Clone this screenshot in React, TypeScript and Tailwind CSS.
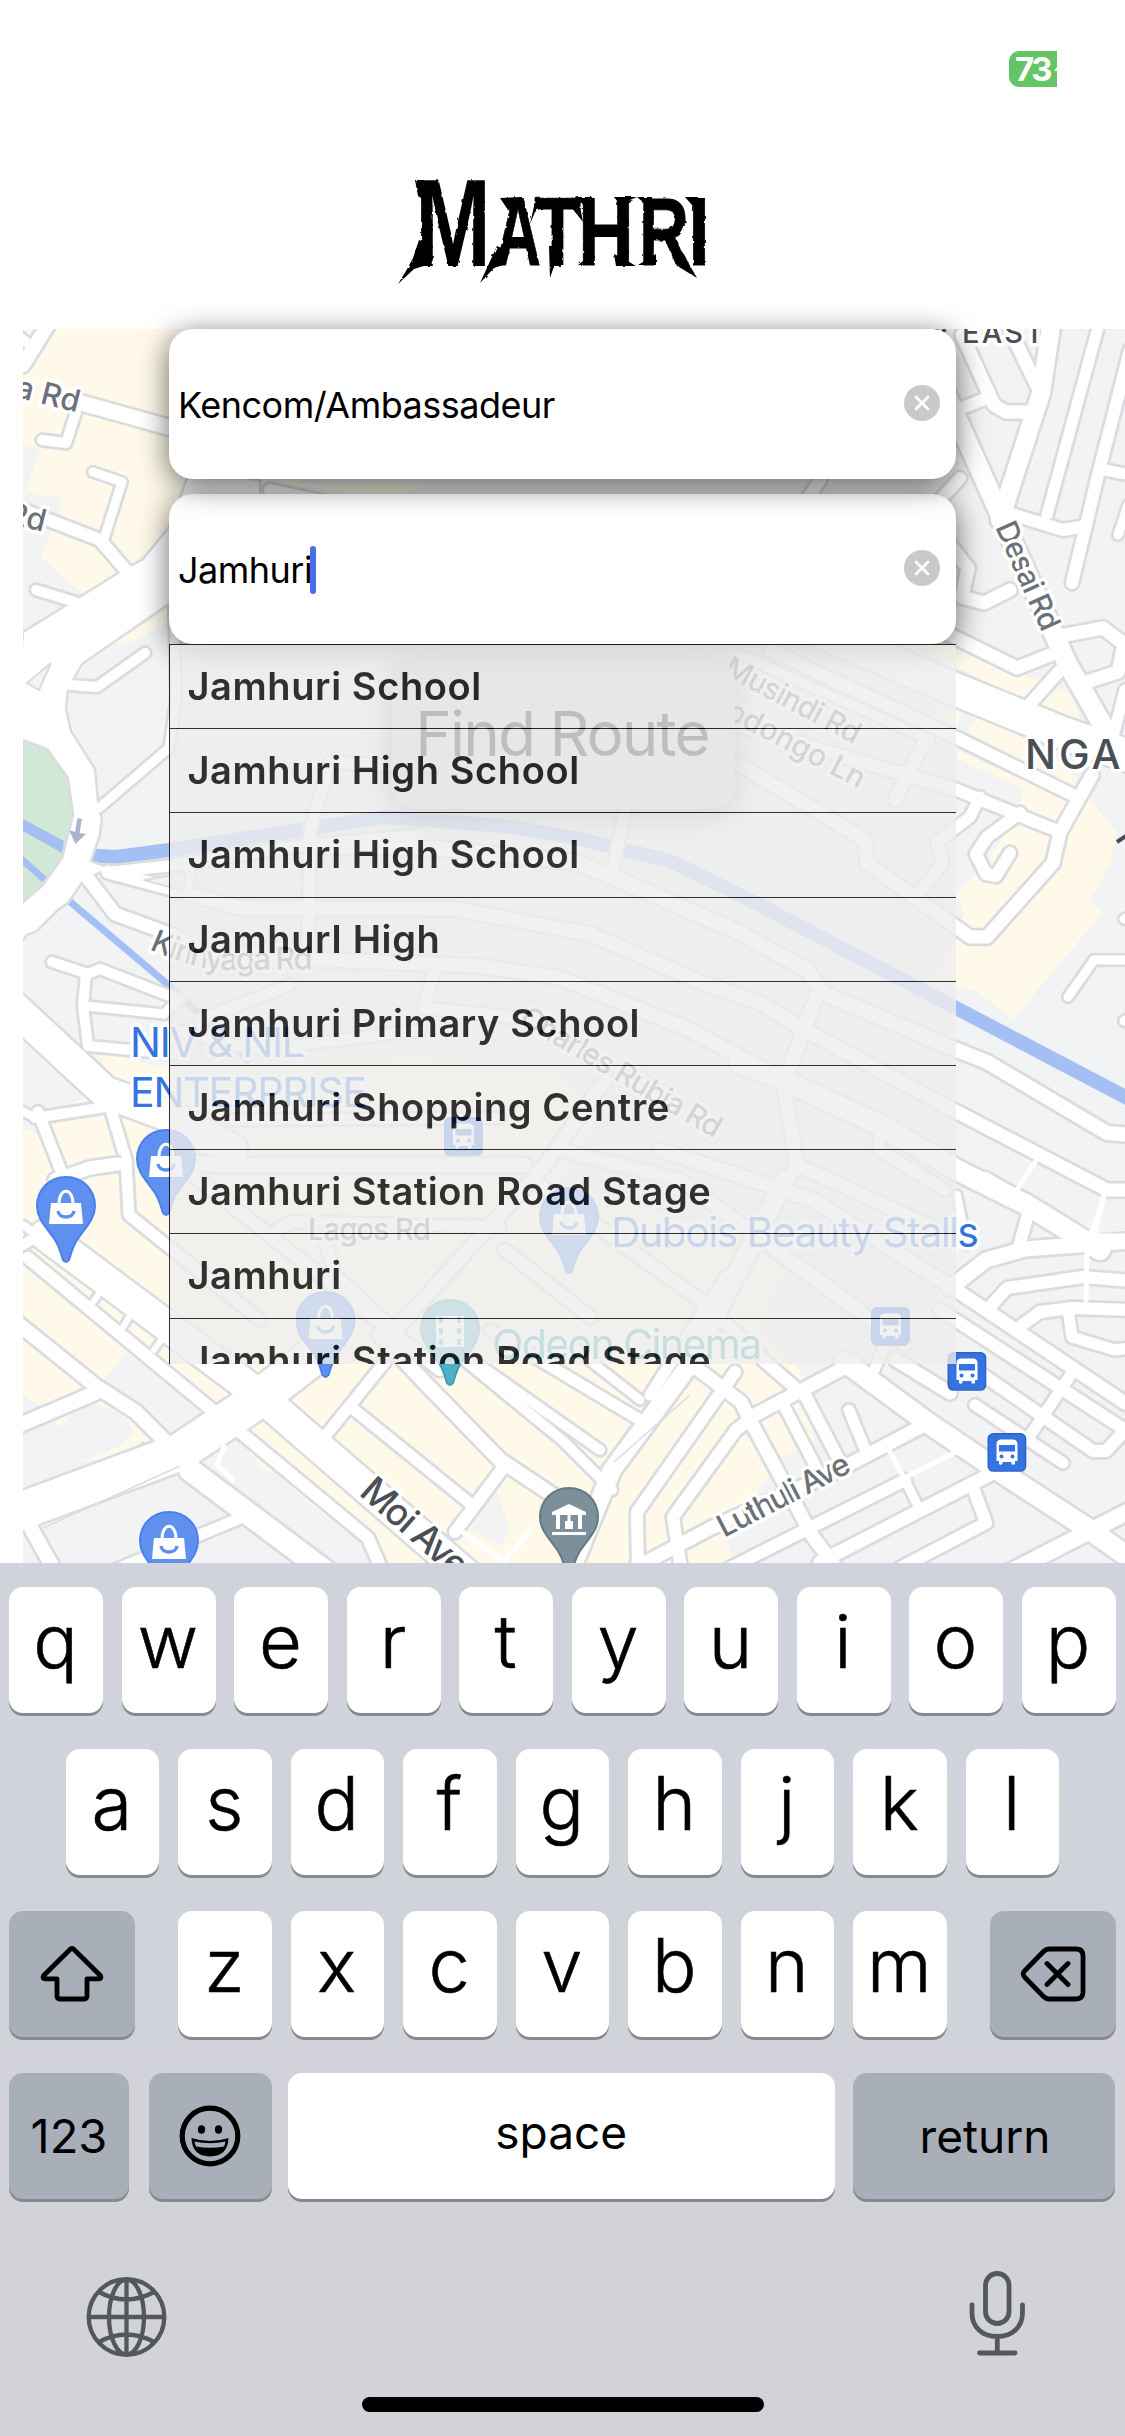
import React from "react";

type Road = [string, number];

/* Street centre lines with the width of the white carriageway. */
const roads: Road[] = [
  // north-west corner
  ["M23 365 L52 318", 14],
  ["M10 330 L30 345", 10],
  ["M78 402 L200 436", 15],
  ["M76 412 L66 443 L42 440", 10],
  ["M93 472 L122 482 L102 545", 9],
  ["M23 510 L100 540 L130 575", 12],
  ["M36 590 L75 602", 10],
  ["M70 685 L97 687 L145 653", 10],
  ["M174 600 L176 700 L169 748 L99 808", 9],
  ["M112 872 L169 866 L300 846 L420 835", 11],
  ["M108 872 L172 889 L240 908 L455 909 L590 934 L700 982 L760 1003 L805 1030 L957 1112 L1107 1190 L1125 1190", 13],
  ["M320 846 L430 848 L575 862 L620 880 L740 933 L807 970 L823 993 L957 1050 L987 1062 L1107 1133 L1130 1135", 14],
  ["M86 876 L115 914 L175 936 L220 962 L330 960 L480 966 L560 978 L690 1030 L783 1080", 13],
  ["M52 962 L88 974 L100 969 L180 1000", 10],
  ["M86 974 L83 1005 L88 1046 L175 1054", 10],
  ["M86 1006 L164 1014 L178 1000", 9],
  ["M330 762 L310 830 L308 945", 11],
  ["M330 762 L392 766", 11],
  ["M190 868 L186 895", 10],
  ["M625 810 L612 872", 11],
  ["M435 967 L424 1008 L540 1020", 11],
  ["M172 1030 L260 1050 L420 1030", 10],
  ["M200 1020 L290 985", 10],
  // avenues on the west side
  ["M35 1118 L112 1106", 10],
  ["M38 1112 L66 1184", 11],
  ["M55 1180 L90 1168 L125 1163", 13],
  ["M20 1110 L40 1120", 8],
  ["M108 1100 L126 1160 L129 1215 L180 1256 L260 1320", 11],
  ["M15 1250 L55 1225", 10],
  ["M23 1225 L50 1245", 8],
  ["M28 1258 L212 1410", 12],
  ["M16 1322 L97 1387 L136 1412 L168 1444", 14],
  ["M15 1427 L95 1393", 14],
  ["M106 1283 L92 1304", 6],
  ["M136 1307 L121 1330", 6],
  ["M167 1332 L154 1350", 6],
  ["M190 1470 L330 1575", 22],
  ["M115 1570 L243 1517", 11],
  ["M22 1512 L60 1580", 14],
  ["M240 1432 L368 1538 L384 1575", 12],
  ["M352 1408 L472 1505", 11],
  ["M318 1445 L385 1362", 11],
  ["M503 1468 L455 1532", 12],
  ["M380 1335 L430 1388 L500 1460 L575 1510", 14],
  ["M170 1160 L215 1165 L525 1165", 14],
  ["M232 1120 L500 1118", 10],
  ["M183 1167 L440 1370", 12],
  ["M270 1235 L290 1222 L500 1227", 11],
  ["M325 1240 L335 1275 L400 1335", 11],
  ["M605 1080 L545 1165 L400 1325", 13],
  ["M505 1250 L590 1317", 12],
  ["M540 1185 L700 1300 L760 1355", 12],
  ["M560 1150 L680 1180 L860 1310", 12],
  ["M440 1340 L562 1440 L612 1490", 10],
  ["M465 1355 L600 1450", 10],
  ["M490 1330 L640 1420", 11],
  ["M570 1345 L640 1400", 9],
  ["M660 1150 L813 1200 L956 1290 L1125 1403", 13],
  ["M785 1180 L690 1364 L612 1470 L575 1560", 18],
  ["M774 1250 L905 1345", 12],
  ["M726 1277 L650 1395", 11],
  ["M783 1080 L797 1165 L775 1200", 13],
  ["M797 1165 L960 1240", 12],
  ["M880 1125 L879 1150 L945 1190", 11],
  ["M817 995 L785 1080", 13],
  ["M740 1063 L783 1080 L880 1125 L957 1170 L1027 1205 L1100 1250", 20],
  // downtown grid
  ["M735 1372 L637 1512 L638 1575", 12],
  ["M749 1420 L736 1430 L673 1517 L682 1575", 12],
  ["M695 1367 L741 1402 L751 1422 L813 1537 L838 1570", 13],
  ["M749 1418 L806 1388 L855 1362", 13],
  ["M763 1360 L806 1397 L840 1462", 12],
  ["M783 1404 L820 1475", 11],
  ["M845 1362 L928 1423 L993 1467 L1093 1532 L1135 1562", 20],
  ["M928 1423 L835 1472 L713 1527 L635 1568", 13],
  ["M849 1410 L867 1454", 11],
  ["M905 1480 L730 1568", 12],
  ["M993 1473 L917 1512 L820 1562", 13],
  ["M905 1480 L920 1510", 9],
  ["M973 1487 L986 1523 L900 1568", 12],
  ["M1135 1508 L1010 1572", 16],
  ["M885 1345 L870 1380", 10],
  ["M896 1360 L950 1393", 13],
  ["M975 1405 L1063 1463", 11],
  ["M980 1373 L1093 1451 L1106 1451 L1130 1425", 12],
  ["M1072 1373 L1029 1437", 11],
  ["M940 1310 L1125 1430", 12],
  ["M950 1288 L986 1260 L1025 1249 L1130 1241", 15],
  ["M989 1308 L1007 1288 L1083 1277 L1130 1281", 12],
  ["M1022 1325 L1040 1312 L1072 1308 L1130 1310", 12],
  ["M1068 1310 L1072 1337 L1115 1350 L1130 1348", 11],
  ["M1028 1214 L1018 1250", 12],
  ["M957 1195 L967 1245", 8],
  // north-east
  ["M944 390 L1067 663 L1117 750", 19],
  ["M962 335 L994 405 L1006 412 L1035 412", 13],
  ["M945 415 L987 398", 12],
  ["M1005 320 L1040 392", 13],
  ["M1052 320 L1041 393 L1000 520", 18],
  ["M1100 320 L1047 515", 11],
  ["M1130 350 L1098 475 L1072 583", 12],
  ["M1105 470 L1135 476", 11],
  ["M1005 512 L1063 530 L1086 526", 12],
  ["M1118 535 L1128 505", 9],
  ["M950 545 L968 568 L962 597 L984 603 L1010 590", 13],
  ["M940 500 L960 478", 12],
  ["M940 630 L1017 668 L1050 655", 13],
  ["M1030 704 L1062 668", 12],
  ["M1055 637 L1103 628 L1124 644 L1118 672 L1080 684", 13],
  ["M1125 690 L1112 740", 11],
  ["M770 650 L957 738 L1077 797", 12],
  ["M740 655 L930 740", 9],
  ["M720 720 L957 790 L1060 832", 12],
  ["M1092 775 L1060 832 L1053 863 L987 937 L970 937 L867 863 L865 840 L740 765", 13],
  ["M980 797 L970 817 L937 842 L943 862 L920 893", 11],
  ["M1020 813 L987 837 L976 854 L986 874 L996 876 L1010 853", 12],
  ["M1068 997 L1094 960 L1130 960", 9],
  ["M1124 919 L1135 915", 9],
  ["M1124 1021 L1135 1015", 9],
  ["M925 740 L895 800", 12],
  ["M270 490 L340 505 L420 520", 12],
  ["M820 480 L800 510", 12],
];

/* Blocks shaded as commercial areas. */
const sand = [
  "M23 329 H300 V500 H188 L169 527 L132 566 L82 594 L41 557 L63 498 L40 495 L26 489 L40 449 L23 444Z",
  "M118 640 L166 610 V624 L118 648Z",
  "M290 484 L420 484 L400 500Z",
  "M98 1052 L169 1068 L420 1058 L560 1070 L600 1120 L560 1180 L790 1255 L760 1330 L800 1370 L815 1440 L781 1457 L757 1493 L727 1540 L734 1563 L390 1563 L263 1471 L240 1440 L23 1470 V1122 L60 1110 L112 1085Z",
  "M820 600 L957 645 L1025 675 L1040 680 L1025 702 L957 667 L800 650Z",
  "M1037 707 L1060 687 L1073 697 L1084 729Z",
  "M1098 707 L1125 712 L1118 725Z",
  "M940 700 L962 715 L950 740 L930 725Z",
  "M967 733 L977 718 L1030 738 L1077 777 L1073 790Z",
  "M957 750 L1073 803 L1058 833 L1018 813 L1023 790 L957 758Z",
  "M1007 830 L1020 817 L1087 795 L1117 833 L1110 865 L1090 900 L1103 913 L1040 987 L1013 1020 L978 992 L930 980 L957 937 L963 913 L957 893 L987 860Z",
];

/* Plain blocks that lie inside the commercial areas. */
const plain = [
  "M23 1395 L38 1405 L60 1427 L85 1400 L122 1414 L134 1433 L118 1447 L23 1484Z",
  "M127 1353 L208 1415 L170 1433 L102 1382Z",
  "M23 1490 L185 1440 L238 1440 L252 1455 L262 1471 L273 1471 L375 1563 H23Z",
  "M485 1500 L495 1485 L510 1530 L500 1545 L470 1530Z",
  "M23 1110 L40 1122 L38 1134 L23 1128Z",
];

const Pin = ({ x, top, fill, edge, children }: { x: number; top: number; fill: string; edge: string; children: React.ReactNode }) => (
  <g transform={`translate(${x} ${top})`}>
    <path
      d="M0 1 C-17 1 -29 14 -29 30 C-29 43 -20 51 -11 64 C-6 72 -5 78 -3 84 Q0 88 3 84 C5 78 6 72 11 64 C20 51 29 43 29 30 C29 14 17 1 0 1Z"
      fill={fill}
      stroke={edge}
      strokeWidth="2"
    />
    {children}
  </g>
);

const BagPin = ({ x, top }: { x: number; top: number }) => (
  <Pin x={x} top={top} fill="#5f8fef" edge="#4a80ee">
    <path d="M-15 27 H15 L17 48 H-17Z" fill="#fff" />
    <path d="M-7 28 C-7 11 7 11 7 28" fill="none" stroke="#fff" strokeWidth="3" />
    <path d="M-8 35 C-7 43 7 43 8 35" fill="none" stroke="#5f8fef" strokeWidth="3.4" />
  </Pin>
);

const Bus = ({ x, y }: { x: number; y: number }) => (
  <g transform={`translate(${x} ${y})`}>
    <rect x="0.7" y="0.7" width="37.4" height="37.4" rx="5" fill="#3573e0" stroke="#2b62c9" strokeWidth="1.4" />
    <path d="M13 6.500 H26 Q30 7 30 11 V28 H27.500 V31 Q25.500 32.500 24 31 V29 H15 V31 Q13 32.500 11.500 31 V28 H9 V11 Q9 7 13 6.500Z" fill="#fff" />
    <rect x="11.500" y="12" width="16" height="6.500" fill="#3573e0" />
    <circle cx="14" cy="23.500" r="2" fill="#3573e0" />
    <circle cx="25" cy="23.500" r="2" fill="#3573e0" />
  </g>
);

function CityMap() {
  return (
    <svg className="absolute left-[23px] top-0 h-[1234px] w-[1102px]" viewBox="23 329 1102 1234" fontFamily="Inter, sans-serif">
      <rect x="23" y="329" width="1102" height="1234" fill="#f1f3f4" />
      {sand.map((d) => (
        <path key={d} d={d} fill="#fef9e8" />
      ))}
      {plain.map((d) => (
        <path key={d} d={d} fill="#f1f3f4" />
      ))}

      {/* park and water */}
      <path d="M23 739 L47 749 L68 778 L73 815 L62 858 L42 885 L23 903Z" fill="#d1e8d6" stroke="#dadce0" strokeWidth="2" />
      <path d="M23 819 L64 841 L62 853 L23 831Z M23 856 L47 877 L42 882 L23 865Z" fill="#a3bff4" />
      <path d="M68 900 L172 988 L250 1062" fill="none" stroke="#a3bff4" strokeWidth="7" />
      <path d="M85 855 L116 857 L169 850 L306 829 L385 817 L505 826 L575 838 L670 861 L740 895 L956 1008 L1135 1102" fill="none" stroke="#a3bff4" strokeWidth="14" />

      {/* street casings, then carriageways */}
      <g fill="none" stroke="#dadce0" strokeLinecap="round" strokeLinejoin="round">
        {roads.map(([d, w]) => (
          <path key={d} d={d} strokeWidth={w + 5.5} />
        ))}
        <path d="M10 1004 L105 1092 L172 1117 L232 1150" strokeWidth="36" />
        <path d="M10 1515 L180 1452 L250 1405 L315 1355" strokeWidth="42" />
        <path d="M45 1235 L258 1394 L470 1578" strokeWidth="35" />
        <path d="M700 580 L957 690 L1060 732 L1140 760" strokeWidth="37" />
        <path d="M985 1180 L1090 1243" strokeWidth="21" />
      </g>
      <path d="M23 632 L118 573 L143 559 L169 527 L190 470 L260 480 V540 L169 604 L82 664 L75 677 L68 690 L66 709 L71 731 L95 769 L99 810 L102 818 L100 835 L91 861 L110 868 L84 880 L68 903 L58 910 L37 931 L27 935 L15 950 L15 909 L42 886 L62 858 L73 815 L68 778 L47 749 L15 737Z" fill="#fff" stroke="#dadce0" strokeWidth="2.500" />
      <g fill="none" stroke="#fff" strokeLinecap="round" strokeLinejoin="round">
        {roads.map(([d, w]) => (
          <path key={d} d={d} strokeWidth={w} />
        ))}
        <path d="M10 1004 L105 1092 L172 1117 L232 1150" strokeWidth="31" />
        <path d="M10 1515 L180 1452 L250 1405 L315 1355" strokeWidth="37" />
        <path d="M45 1235 L258 1394 L470 1578" strokeWidth="30" />
        <path d="M700 580 L957 690 L1060 732 L1140 760" strokeWidth="32" />
        <path d="M985 1180 L1090 1243" strokeWidth="16" />
        <path d="M1104 1195 L1094 1236 L1125 1236 M1103 1200 L1087 1245 L1086 1300 M1035 1162 L1017 1190" strokeWidth="5" />
        <path d="M889 1450 L904 1478 L964 1448 M224 1447 L217 1465 L233 1480 M460 1530 L504 1562 L530 1530" strokeWidth="5" />
      </g>
      <path d="M27 683 L51 663 L39 690Z M144 880 L186 873 L184 891Z" fill="#f1f3f4" stroke="#dadce0" strokeWidth="2" />
      <path d="M131 1451 L143 1441 L146 1444Z M118 1158 L120 1154 L122 1158Z" fill="#dadce0" />
      <path d="M43 1528 L180 1466 M690 1395 L614 1462" stroke="#dadce0" strokeWidth="1.500" fill="none" />
      <path d="M77.500 818 L82 819 L79.500 833 L86 834 L75.500 844 L69 830 L75 832Z" fill="#afb2cc" />

      {/* street and district names */}
      <g fill="#6c7077" stroke="#fff" strokeWidth="7" strokeLinejoin="round" paintOrder="stroke" fontSize="31" fontWeight="500">
        <text transform="translate(77 412.500) rotate(14)" textAnchor="end">a Rd</text>
        <text transform="translate(43 532) rotate(14)" textAnchor="end">Rd</text>
        <text transform="translate(995 527) rotate(66)" fontSize="30" textLength="116">Desai Rd</text>
        <text transform="translate(722 674) rotate(28)" fontSize="30" textLength="150">Musindi Rd</text>
        <text transform="translate(859 789) rotate(28)" textAnchor="end" fontSize="30" textLength="172">Kodongo Ln</text>
        <path id="kirinyaga" d="M149 949 C178 962 205 971 232 970 L340 969" fill="none" stroke="none" />
        <text><textPath href="#kirinyaga" textLength="167">Kirinyaga Rd</textPath></text>
        <text transform="translate(518 1023) rotate(30.500)" fontSize="30" textLength="228">Charles Rubia Rd</text>
        <text x="308" y="1240" fontSize="30" textLength="123">Lagos Rd</text>
        <text transform="translate(724 1538) rotate(-27.500)" fontSize="31" textLength="145">Luthuli Ave</text>
      </g>
      <g fill="#4b4f55" stroke="#fff" strokeWidth="7" strokeLinejoin="round" paintOrder="stroke" fontWeight="500">
        <text x="962" y="343" fontSize="29" textLength="82">EAST</text>
        <text x="1025" y="769" fontSize="41" letterSpacing="3">NGA</text>
        <text transform="translate(358 1494) rotate(41.500)" fontSize="37" textLength="130">Moi Ave</text>
      </g>
      <path d="M1117 842 L1126 836 M936 331 L938 329 M943 329 L945 332" stroke="#4b4f55" strokeWidth="4" />
      <g fill="#3573e0" stroke="#fff" strokeWidth="7" strokeLinejoin="round" paintOrder="stroke" fontSize="41" fontWeight="400">
        <text x="130" y="1057" textLength="175">NIV &amp; NIL</text>
        <text x="130" y="1107" textLength="237">ENTERPRISE</text>
        <text x="611" y="1247" textLength="368">Dubois Beauty Stalls</text>
        <text x="492" y="1359" textLength="270" fill="#2fa0a5">Odeon Cinema</text>
      </g>

      {/* places */}
      <BagPin x={166} top={1129} />
      <BagPin x={66} top={1176} />
      <BagPin x={569} top={1187} />
      <BagPin x={325.5} top={1291} />
      <BagPin x={169} top={1511} />
      <Pin x={450} top={1299} fill="#50afc6" edge="#3f9db0">
        <path d="M-14 17 H14 V48 H-14Z" fill="#fff" />
        <path d="M-9 18 V48 M9 18 V48" stroke="#50afc6" strokeWidth="4" strokeDasharray="6 5" />
      </Pin>
      <Pin x={569} top={1487} fill="#7d8f9a" edge="#637984">
        <path d="M0 17 L17 25 V28 H-17 V25Z M-13 28 H-9 V42 H-13Z M-4 34 H4 V42 H-4Z M9 28 H13 V42 H9Z M-1.500 28 H1.500 V36 H-1.500Z M-17 45 H17 V48 H-17Z" fill="#fff" />
      </Pin>
      <Bus x={444} y={1117} />
      <Bus x={871} y={1307} />
      <Bus x={947.5} y={1352} />
      <Bus x={987.5} y={1433} />
    </svg>
  );
}

/* Word mark: condensed capitals with thorned feet and roughened edges. */
function Logo() {
  return (
    <svg className="absolute left-[390px] top-[170px] h-[125px] w-[330px]" viewBox="390 170 330 125" role="img">
      <filter id="rough" x="-5%" y="-5%" width="110%" height="110%">
        <feTurbulence type="fractalNoise" baseFrequency="0.2" numOctaves="1" seed="4" />
        <feDisplacementMap in="SourceGraphic" scale="3" />
      </filter>
      <g filter="url(#rough)" fill="#000" fontFamily="Liberation Sans, sans-serif" fontWeight="700">
        <text x="415" y="266" fontSize="124" textLength="76" lengthAdjust="spacingAndGlyphs">M</text>
        <g fontSize="97" stroke="#000" strokeWidth="0.8">
          <text x="495" y="265" textLength="46" lengthAdjust="spacingAndGlyphs">A</text>
          <text x="534" y="265" textLength="47" lengthAdjust="spacingAndGlyphs">T</text>
          <text x="578" y="265" textLength="56" lengthAdjust="spacingAndGlyphs">H</text>
          <text x="639" y="265" textLength="50" lengthAdjust="spacingAndGlyphs">R</text>
          <text x="688" y="265" textLength="22" lengthAdjust="spacingAndGlyphs">I</text>
        </g>
        <path d="M419 240 L433 246 L427 265 L414 269 L398 284 L406 271 L413 258Z M415 180 H424 V200 L418 196Z" />
        <path d="M497 246 L510 252 L503 265 L494 268 L480 283 L486 270Z M500 198 L521 197 L515 212 L508 210Z" />
        <path d="M549 246 H562 L561 266 L554 266 L550 278Z M536 197 L542 207 L535 212 L530 224Z M572 197 L580 206 L583 222 L571 207Z" />
        <path d="M577 197 H592 V208 L584 206Z M578 265 H592 V254Z M614 197 H637 L630 200 L624 210Z M614 254 L626 260 L636 266 L616 266Z" />
        <path d="M637 197 H652 V210Z M638 265 H656 V254Z M668 246 L684 254 L689 264 L697 278 L679 267Z M685 197 H698 V212Z" />
      </g>
    </svg>
  );
}

const ClearButton = () => (
  <button aria-label="Clear" className="mr-[16.500px] mb-[2px] flex size-9 items-center justify-center rounded-full bg-[#c9c9c9]">
    <svg viewBox="0 0 36 36" className="size-9">
      <path d="M12 12 L24 24 M24 12 L12 24" stroke="#fff" strokeWidth="2.800" strokeLinecap="round" />
    </svg>
  </button>
);

const suggestions = [
  "Jamhuri School",
  "Jamhuri High School",
  "Jamhuri High School",
  "JamhurI High",
  "Jamhuri Primary School",
  "Jamhuri Shopping Centre",
  "Jamhuri Station Road Stage",
  "Jamhuri",
  "Jamhuri Station Road Stage",
];

const fieldClass =
  "relative flex h-[150px] w-full items-center justify-between rounded-[24px] bg-white pl-[9px] shadow-[0_6px_30px_rgba(0,0,0,0.6)]";

const Key = ({ label }: { label: string }) => (
  <div className="flex h-[126px] w-[93.750px] items-center justify-center rounded-[14px] bg-white pr-[1.500px] pb-[18px] text-[74px] leading-none font-light shadow-[0_3px_0_#88898d] [-webkit-text-stroke:0.600px_black]">
    {label}
  </div>
);

const darkKey = "flex h-[126px] items-center justify-center rounded-[14px] bg-[#a9afb9] shadow-[0_3px_0_#88898d]";

function Keyboard() {
  return (
    <section className="relative flex h-[873px] flex-col bg-linear-to-b from-[#d0d3dc] to-[#d2d3d8] pt-6">
      <div className="flex flex-col gap-9">
        <div className="flex justify-center gap-[18.750px]">
          {"qwertyuiop".split("").map((k) => (
            <Key key={k} label={k} />
          ))}
        </div>
        <div className="flex justify-center gap-[18.750px]">
          {"asdfghjkl".split("").map((k) => (
            <Key key={k} label={k} />
          ))}
        </div>
        <div className="flex justify-between px-[9px]">
          <div className={`${darkKey} w-[126px]`}>
            <svg viewBox="0 0 64 56" className="h-14 w-16" fill="none" stroke="#000" strokeWidth="4.800" strokeLinejoin="round">
              <path d="M30.300 3.300 Q32 1.800 33.700 3.300 L60.300 29.500 Q62 32.500 59 32.800 H47 V50 Q47 53 44 53 H20 Q17 53 17 50 V32.800 H5 Q2 32.500 3.700 29.500Z" />
            </svg>
          </div>
          <div className="flex gap-[18.750px]">
            {"zxcvbnm".split("").map((k) => (
              <Key key={k} label={k} />
            ))}
          </div>
          <div className={`${darkKey} w-[126px]`}>
            <svg viewBox="0 0 66 56" className="h-14 w-[66px]" fill="none" stroke="#000" strokeWidth="4.800" strokeLinejoin="round" strokeLinecap="round">
              <path d="M29 3 H56 Q63 3 63 10 V46 Q63 53 56 53 H29 Q26 53 23.500 50.500 L4.500 31 Q2 28 4.500 25 L23.500 5.500 Q26 3 29 3Z M27 17.500 L48 38.500 M48 17.500 L27 38.500" />
            </svg>
          </div>
        </div>
        <div className="flex px-[9px] text-[46px] font-normal">
          <div className={`${darkKey} w-[120px]`}>
            <span className="text-[47px]">123</span>
          </div>
          <div className={`${darkKey} ml-[19.500px] w-[123px]`}>
            <svg viewBox="0 0 62 62" className="size-[62px]">
              <circle cx="31" cy="31" r="27.800" fill="none" stroke="#000" strokeWidth="5.200" />
              <ellipse cx="22.500" cy="24.500" rx="3.600" ry="4.200" />
              <ellipse cx="39.500" cy="24.500" rx="3.600" ry="4.200" />
              <path d="M12.500 33 Q31 39 49.500 33 Q49 51 31 51.500 Q13 51 12.500 33Z" />
              <path d="M15.500 36.500 Q31 40 46.500 36.500 Q46 39.500 45 41.500 Q31 44 17 41.500 Q16 39.500 15.500 36.500Z" fill="#a9afb9" />
            </svg>
          </div>
          <div className="ml-[16.500px] flex h-[126px] w-[546.500px] items-center justify-center rounded-[14px] bg-white pb-[7px] shadow-[0_3px_0_#88898d]">space</div>
          <div className={`${darkKey} ml-[18.500px] w-[262px] pl-[2px]`}>return</div>
        </div>
      </div>

      <div className="mt-[70px] flex items-center justify-between pr-[99px] pl-[85.500px]">
        <svg viewBox="0 0 82 82" className="mt-[6px] size-[82px]" fill="none" stroke="#54575d" strokeWidth="4.300">
          <circle cx="40.500" cy="41" r="37.800" />
          <path d="M3 41 H78 M40.500 3.500 V78.500 M13 16 Q40.500 31 68 16 M13 66 Q40.500 51 68 66" />
          <ellipse cx="40.500" cy="41" rx="17.500" ry="37.500" />
        </svg>
        <svg viewBox="0 0 58 88" className="mt-px h-[88px] w-[58px]" fill="none" stroke="#54575d" strokeWidth="4.800" strokeLinecap="round">
          <rect x="17.500" y="3.500" width="23.500" height="50" rx="11.750" />
          <path d="M4 35 V43 C4 57 14 66.500 29.300 66.500 C44 66.500 54.500 57 54.500 43 V35 M29.300 67 V82 M11.500 83 H47" />
        </svg>
      </div>
      <div className="mt-auto mb-6 h-[15px] w-[402px] self-center rounded-full bg-black" />
    </section>
  );
}

export default function App() {
  return (
    <main className="flex h-[2436px] w-[1125px] flex-col overflow-hidden bg-white font-['Inter',sans-serif] text-black">
      <header className="relative flex h-[329px] justify-end pt-[51px] pr-[68px]">
        <div className="flex h-9 w-[48px] items-center overflow-hidden rounded-l-[10px] bg-[#65c466] pl-[6px] text-[33px] leading-none font-bold tracking-[-2.500px] whitespace-nowrap text-white">
          73
          <svg viewBox="0 0 8 14" className="ml-[2px] h-[14px] w-2 shrink-0" fill="#fff">
            <path d="M8 1 L2 9 H8Z" />
          </svg>
        </div>
        <Logo />
      </header>

      <section className="relative h-[1234px]">
        <CityMap />
        <button className="absolute top-[329px] left-[392px] h-[151px] w-[343px] rounded-[24px] bg-[#cbcbcb] text-[62px] font-normal shadow-[0_6px_30px_rgba(0,0,0,0.5)]">
          <span className="mr-[3px] tracking-[-1.900px]">Find Route</span>
        </button>
        <div className="relative ml-[169px] w-[787px]">
          <div className="flex flex-col gap-[15px]">
            <div className={`${fieldClass} z-10`}>
              <span className="pt-[2px] text-[36px] tracking-[-0.500px]">Kencom/Ambassadeur</span>
              <ClearButton />
            </div>
            <div className={fieldClass}>
              <span className="flex items-center pt-px text-[36px] tracking-[-0.500px]">
                Jamhuri
                <span className="-ml-[2.500px] h-12 w-[6px] rounded-full bg-[#4c6de8]" />
              </span>
              <ClearButton />
            </div>
          </div>
          <ul className="relative h-[720px] overflow-hidden border-l border-black bg-[#eeeeee] opacity-80">
            {suggestions.map((name, i) => (
              <li key={i} className="flex h-[84.200px] items-center border-t border-black pl-[17.500px] text-[38px] font-semibold tracking-[0.600px] whitespace-nowrap">
                {name}
              </li>
            ))}
          </ul>
        </div>
      </section>

      <Keyboard />
    </main>
  );
}
